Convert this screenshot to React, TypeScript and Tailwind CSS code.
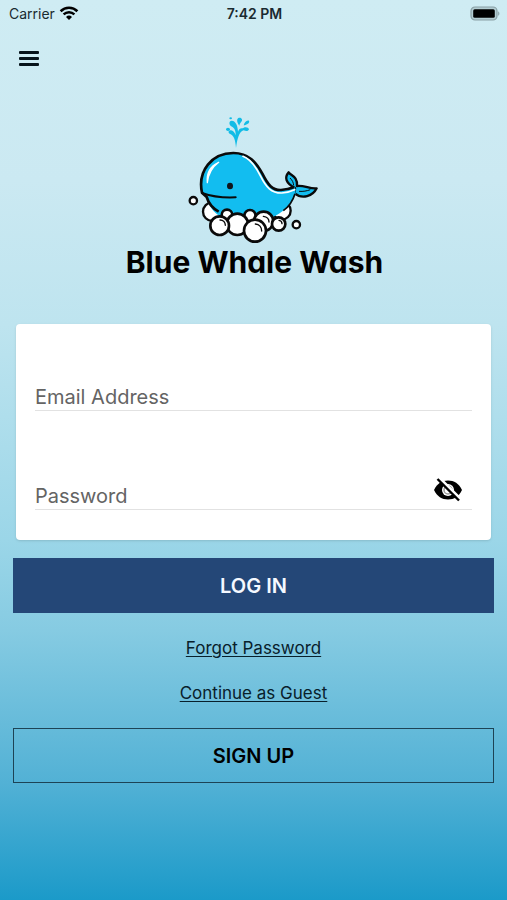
import { useState } from "react";

function StatusBar() {
    return (
        <div className="grid h-7 grid-cols-3 items-center pr-[7px] pl-[9px] text-sm text-[#1a2a30]">
            <div className="flex items-center gap-1">
                <span>Carrier</span>
                <svg width="20" height="16" viewBox="0 0 20 16" fill="none" aria-hidden="true">
                    <path d="M1.6 5.2a12 12 0 0 1 16.8 0" stroke="#000" strokeWidth="2.6" />
                    <path d="M4.6 8.4a7.8 7.800 0 0 1 10.800 0" stroke="#000" strokeWidth="2.4" />
                    <path d="M10 14 7 11a4.300 4.300 0 0 1 6 0z" fill="#000" />
                </svg>
            </div>
            <span className="text-center font-semibold">7:42 PM</span>
            <svg className="justify-self-end" width="30" height="16" viewBox="0 0 30 16" aria-hidden="true">
                <rect x="1" y="1" width="26" height="13" rx="4" fill="#b3cdd2" stroke="#89a0a5" strokeWidth="1.2" />
                <rect x="3.2" y="3.2" width="21.6" height="8.6" rx="1.5" fill="#000" />
                <path d="M28.2 5.2c1.6.7 1.6 3.9 0 4.6z" fill="#89a0a5" />
            </svg>
        </div>
    );
}

function WhaleLogo() {
    return (
        <svg className="w-[150px]" viewBox="0 0 450 420" fill="none" aria-hidden="true">
            {/* spout */}
            <g fill="#12bce6">
                <path d="M168 114C166 90 162 78 152 73C143 70 144 60 153 61C159 62 164 67 167 76C168 62 163 54 156 50C146 45 146 33 155 32C168 33 173 48 174 65C177 57 181 54 188 55C194 49 206 51 207 58C205 65 197 64 191 61C177 65 172 87 168 114Z" />
                <path d="M175 24c8-3 14 4 10 10-3 4-6 7-7 13-5-6-10-18-3-23z" />
                <path d="M207 32c3 8-7 12-16 14 2-9 9-17 16-14z" />
                <ellipse cx="144" cy="58" rx="6" ry="5" />
                <ellipse cx="152" cy="25" rx="4" ry="3" />
            </g>

            {/* foam behind the body */}
            <g fill="#fff" stroke="#0a0a0a" strokeWidth="7">
                <circle cx="97" cy="305" r="28" />
                <circle cx="305" cy="302" r="27" />
                <circle cx="40" cy="272" r="11" />
                <circle cx="349" cy="344" r="11" />
            </g>

            {/* tail and body */}
            <path d="M345 234C316 219 313 202 326 187C333 198 353 198 351 228C372 225 391 238 410 235C399 258 367 269 344 250Z" fill="#12bdf0" stroke="#0a0a0a" strokeWidth="7" strokeLinejoin="round" />
            <path d="M66 248C52 182 96 129 160 129C207 129 229 158 247 191C264 225 277 241 303 240C320 239 333 235 345 230L347 252C334 283 307 311 275 322H125C101 308 85 287 80 260Z" fill="#12bdf0" />
            <path d="M116 305C96 294 85 278 80 261L66 248C52 182 96 129 160 129C207 129 229 158 247 191C264 225 277 241 303 240C320 239 333 235 343 231" stroke="#0a0a0a" strokeWidth="8" strokeLinejoin="round" />
            <path d="M345 251C339 271 326 290 310 302" stroke="#0a0a0a" strokeWidth="5" />
            <path d="M189 139C215 149 230 175 242 199C258 231 274 250 306 249C322 248 333 244 344 239" stroke="#fff" strokeWidth="5" strokeLinecap="round" />
            <path d="M82 218C79 188 92 168 116 157C96 172 85 190 82 218Z" fill="#fff" stroke="#fff" strokeWidth="4" strokeLinejoin="round" />
            <path d="M66 249C94 259 128 264 167 262" stroke="#0a0a0a" strokeWidth="6" strokeLinecap="round" />
            <ellipse cx="150" cy="228" rx="9" ry="10" fill="#10141a" />
            <path d="M330 204c7 7 10 13 11 22M357 244c13 1 23-1 34-5" stroke="#0a0a0a" strokeWidth="3" />

            {/* foam in front */}
            <g fill="#fff" stroke="#0a0a0a" strokeWidth="8">
                <circle cx="141" cy="315" r="16" />
                <circle cx="210" cy="317" r="17" />
                <circle cx="251" cy="334" r="29" />
                <circle cx="172" cy="343" r="32" />
                <circle cx="119" cy="347" r="28" />
                <circle cx="296" cy="342" r="20" />
                <circle cx="225" cy="362" r="33" />
            </g>
            <g stroke="#0a0a0a" strokeWidth="4" strokeLinecap="round">
                <path d="M120 330c10 0 16 7 16 16" />
                <path d="M226 342c12 1 19 10 19 21" />
                <path d="M250 319c10 1 17 8 17 17" />
                <path d="M297 331c6 1 9 5 9 10" />
            </g>
        </svg>
    );
}

export default function App() {
    const [showPassword, setShowPassword] = useState(false);

    return (
        <main className="min-h-screen bg-[linear-gradient(180deg,#cfecf3_0%,#cbe9f2_20%,#bee4ef_36%,#9bd6e8_60%,#86cbe2_70%,#52b1d5_87%,#1b9ac9_100%)] font-['Inter','Liberation_Sans',sans-serif]">
            <StatusBar />

            <header className="flex px-[17px] pt-[15px]">
                <button type="button" aria-label="Menu" className="flex h-8 w-6 items-center justify-center">
                    <svg width="20" height="18" viewBox="0 0 20 18" fill="#06141b" aria-hidden="true">
                        <rect y="1" width="20" height="3" rx="1" />
                        <rect y="7" width="20" height="3" rx="1" />
                        <rect y="13" width="20" height="3" rx="1" />
                    </svg>
                </button>
            </header>

            <div className="flex flex-col items-center pt-[35px] pl-[2px]">
                <WhaleLogo />
                <h1 className="-mt-2 font-bold text-[30px] leading-10 text-black [font-feature-settings:'cv11']">Blue Whale Wash</h1>
            </div>

            <form className="px-[13px] pt-[42px]" onSubmit={(e) => e.preventDefault()}>
                <div className="mx-[3px] rounded-sm bg-white px-[19px] pt-14 pb-[30px] shadow">
                    <div className="border-b border-[#e2e2e2]">
                        <input
                            type="email"
                            aria-label="Email Address"
                            placeholder="Email Address"
                            className="block h-[30px] w-full pt-1 text-xl text-black outline-none placeholder:text-[#646464]"
                        />
                    </div>
                    <div className="mt-[60px] flex items-end border-b border-[#e2e2e2]">
                        <input
                            type={showPassword ? "text" : "password"}
                            aria-label="Password"
                            placeholder="Password"
                            className="block h-[30px] min-w-0 flex-1 pt-1 text-xl text-black outline-none placeholder:text-[#646464]"
                        />
                        <button
                            type="button"
                            aria-label="Show password"
                            className="h-[38px] px-2"
                            onClick={() => setShowPassword(!showPassword)}
                        >
                            <svg width="32" height="28" viewBox="0 0 32 28" aria-hidden="true">
                                <path d="M2 14C5 7.500 10 4.500 16 4.500S27 7.500 30 14C27 20.500 22 23.500 16 23.500S5 20.500 2 14Z" fill="#000" />
                                <circle cx="16" cy="14" r="6" fill="#fff" />
                                <circle cx="16" cy="14" r="4" fill="none" stroke="#999" strokeWidth="1.500" />
                                <path d="M7 1.500 29 23.500" stroke="#fff" strokeWidth="3" />
                                <path d="M5.500 3 27 24.500" stroke="#000" strokeWidth="2.400" />
                            </svg>
                        </button>
                    </div>
                </div>

                <button type="submit" className="mt-[18px] block h-[55px] w-full bg-[#244777] text-xl font-semibold text-[#f5f9ff]">
                    LOG IN
                </button>

                <div className="flex flex-col items-center gap-[21px] py-[23px] text-[17px] leading-6 text-[#08202b]">
                    <a href="#forgot" className="underline underline-offset-2">Forgot Password</a>
                    <a href="#guest" className="underline underline-offset-2">Continue as Guest</a>
                </div>

                <button type="button" className="block h-[55px] w-full border border-[#1d4355] text-xl font-semibold text-black">
                    SIGN UP
                </button>
            </form>
        </main>
    );
}
